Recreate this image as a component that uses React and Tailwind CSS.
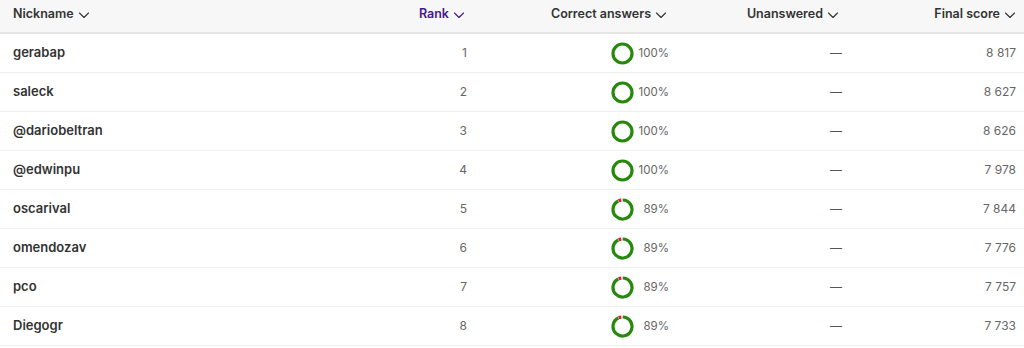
import React from "react";

const rows = [
  { name: "gerabap", rank: 1, pct: 100, score: "8 817" },
  { name: "saleck", rank: 2, pct: 100, score: "8 627" },
  { name: "@dariobeltran", rank: 3, pct: 100, score: "8 626" },
  { name: "@edwinpu", rank: 4, pct: 100, score: "7 978" },
  { name: "oscarival", rank: 5, pct: 89, score: "7 844" },
  { name: "omendozav", rank: 6, pct: 89, score: "7 776" },
  { name: "pco", rank: 7, pct: 89, score: "7 757" },
  { name: "Diegogr", rank: 8, pct: 89, score: "7 733" },
];

function Chevron() {
  return (
    <svg width="12" height="12" viewBox="0 0 12 12" className="ml-[4px] shrink-0" fill="none">
      <path d="M1.5 4l4.5 4.5L10.5 4" stroke="currentColor" strokeWidth="1.1" strokeLinecap="round" strokeLinejoin="round" />
    </svg>
  );
}

function arcPath(cx, cy, r, a0, a1) {
  const rad = (a) => ((a - 90) * Math.PI) / 180;
  const x0 = cx + r * Math.cos(rad(a0));
  const y0 = cy + r * Math.sin(rad(a0));
  const x1 = cx + r * Math.cos(rad(a1));
  const y1 = cy + r * Math.sin(rad(a1));
  const large = a1 - a0 > 180 ? 1 : 0;
  return `M${x0} ${y0} A${r} ${r} 0 ${large} 1 ${x1} ${y1}`;
}

function Ring({ pct }) {
  if (pct === 100) {
    return (
      <svg width="23" height="23" viewBox="0 0 23 23" className="shrink-0">
        <circle cx="11.5" cy="11.5" r="9.5" fill="none" stroke="#26890c" strokeWidth="3.2" />
      </svg>
    );
  }
  return (
    <svg width="23" height="23" viewBox="0 0 23 23" className="shrink-0">
      <path d={arcPath(11.5, 11.5, 9.5, 1, 334)} fill="none" stroke="#26890c" strokeWidth="3.2" />
      <path d={arcPath(11.5, 11.5, 9.5, 336, 353)} fill="none" stroke="#e21b3c" strokeWidth="3.2" />
    </svg>
  );
}

const grid = "grid grid-cols-[300px_176px_200px_174px_174px]";

export default function App() {
  return (
    <div className="w-[1024px] h-[348px] bg-white overflow-hidden" style={{ fontFamily: "Inter, 'Noto Sans', sans-serif" }}>
      <div className={`${grid} h-[34px] bg-[#f7f7f7] border-b-2 border-[#e6e6e6] text-[12.5px] font-semibold text-[#333333]`}>
        <div className="flex items-center pl-[13px] pb-[3px]">Nickname<Chevron /></div>
        <div className="flex items-center justify-end pr-[11px] pb-[3px] text-[#46178f]">Rank<Chevron /></div>
        <div className="flex items-center justify-end pr-[9px] pb-[3px]">Correct answers<Chevron /></div>
        <div className="flex items-center justify-end pr-[11px] pb-[3px]">Unanswered<Chevron /></div>
        <div className="flex items-center justify-end pr-[8px] pb-[3px]">Final score<Chevron /></div>
      </div>
      {rows.map((r) => (
        <div key={r.rank} className={`${grid} h-[39px] border-b border-[#f0f0f0]`}>
          <div className="flex items-center pl-[13px] text-[13px] font-semibold text-[#333333]">{r.name}</div>
          <div className="flex items-center justify-end pr-[9px] text-[12px] text-[#666666]">{r.rank}</div>
          <div className="flex items-center justify-end pr-[7px] gap-[2px] text-[11.5px] text-[#666666]">
            <Ring pct={r.pct} />
            <span className="w-[33px] text-right leading-[23px] pt-[1px]">{r.pct}%</span>
          </div>
          <div className="flex items-center justify-end pr-[8px] text-[12px] text-[#555555]">—</div>
          <div className="flex items-center justify-end pr-[8px] text-[12px] text-[#666666]">{r.score}</div>
        </div>
      ))}
    </div>
  );
}
